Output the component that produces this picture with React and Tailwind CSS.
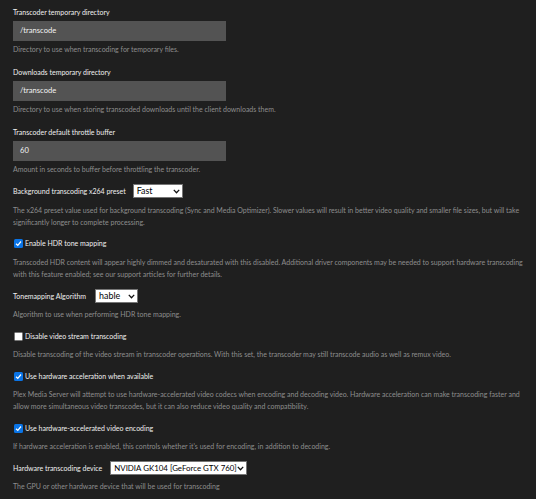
import React from "react";

const font = { fontFamily: 'Lato, "Open Sans", Arial, sans-serif' };

function Label({ children, className = "" }) {
  return <div className={`h-[12px] leading-[12px] text-[7px] text-[#f0f0f0] whitespace-nowrap ${className}`}>{children}</div>;
}

function Help({ children, className = "" }) {
  return <div className={`leading-[12px] text-[7px] text-[#8e8e8e] pr-[8px] ${className}`}>{children}</div>;
}

function TextInput({ value }) {
  return (
    <div className="mt-[3px] h-[20px] w-[213px] bg-[#535353] flex items-center pl-[7px] text-[7.6px] text-[#f2f2f2]">
      {value}
    </div>
  );
}

function Select({ value, w, size = "text-[8.9px]" }) {
  return (
    <div className={`h-[14px] bg-white border border-[#767676] flex items-center justify-between pl-[3px] pr-[2px] text-black ${size} ${w}`}>
      <span className="leading-[12px] whitespace-nowrap">{value}</span>
      <svg width="7" height="5" viewBox="0 0 7 5" className="shrink-0">
        <path d="M0.8 0.9 L3.5 3.7 L6.2 0.9" fill="none" stroke="#111" strokeWidth="1.3" />
      </svg>
    </div>
  );
}

function Check({ checked, children, className = "" }) {
  return (
    <div className={`h-[12px] flex items-center gap-[2px] ${className}`}>
      {checked ? (
        <div className="w-[9px] h-[9px] rounded-[1.5px] bg-[#0a74e6] flex items-center justify-center ml-[1px]">
          <svg width="7" height="7" viewBox="0 0 7 7">
            <path d="M1 3.7 L2.8 5.4 L6 1.5" fill="none" stroke="white" strokeWidth="1.2" />
          </svg>
        </div>
      ) : (
        <div className="w-[9px] h-[9px] rounded-[1.5px] bg-white border border-[#777] ml-[1px]" />
      )}
      <span className="leading-[12px] text-[7px] text-[#f0f0f0] whitespace-nowrap">{children}</span>
    </div>
  );
}

function Row({ label, children, className = "", gap = "gap-[7px]" }) {
  return (
    <div className={`flex items-center ${gap} ${className}`}>
      <span className="leading-[12px] text-[7px] text-[#f0f0f0] whitespace-nowrap">{label}</span>
      {children}
    </div>
  );
}

export default function App() {
  return (
    <div className="w-[536px] h-[499px] bg-[#1f1f1f] pl-[13px] pt-[6px] overflow-hidden" style={font}>
      <Label>Transcoder temporary directory</Label>
      <TextInput value="/transcode" />
      <Help className="mt-[2px]">Directory to use when transcoding for temporary files.</Help>

      <Label className="mt-[11px]">Downloads temporary directory</Label>
      <TextInput value="/transcode" />
      <Help className="mt-[2px]">Directory to use when storing transcoded downloads until the client downloads them.</Help>

      <Label className="mt-[11px]">Transcoder default throttle buffer</Label>
      <TextInput value="60" />
      <Help className="mt-[2px]">Amount in seconds to buffer before throttling the transcoder.</Help>

      <Row label="Background transcoding x264 preset" className="mt-[9px]">
        <Select value="Fast" w="w-[50px]" />
      </Row>
      <Help className="mt-[6px]">
        The x264 preset value used for background transcoding (Sync and Media Optimizer). Slower values will result in better video quality and smaller file sizes, but will take significantly longer to complete processing.
      </Help>

      <Check checked className="mt-[9px]">Enable HDR tone mapping</Check>
      <Help className="mt-[7px]">
        Transcoded HDR content will appear highly dimmed and desaturated with this disabled. Additional driver components may be needed to support hardware transcoding with this feature enabled; see our support articles for further details.
      </Help>

      <Row label="Tonemapping Algorithm" className="mt-[9px]" gap="gap-[9px]">
        <Select value="hable" w="w-[43px]" />
      </Row>
      <Help className="mt-[5px]">Algorithm to use when performing HDR tone mapping.</Help>

      <Check className="mt-[10px]">Disable video stream transcoding</Check>
      <Help className="mt-[6px]">
        Disable transcoding of the video stream in transcoder operations. With this set, the transcoder may still transcode audio as well as remux video.
      </Help>

      <Check checked className="mt-[10px]">Use hardware acceleration when available</Check>
      <Help className="mt-[6px]">
        Plex Media Server will attempt to use hardware-accelerated video codecs when encoding and decoding video. Hardware acceleration can make transcoding faster and allow more simultaneous video transcodes, but it can also reduce video quality and compatibility.
      </Help>

      <Check checked className="mt-[10px]">Use hardware-accelerated video encoding</Check>
      <Help className="mt-[6px]">
        If hardware acceleration is enabled, this controls whether it's used for encoding, in addition to decoding.
      </Help>

      <Row label="Hardware transcoding device" className="mt-[9px]" gap="gap-[8px]">
        <Select value="NVIDIA GK104 [GeForce GTX 760]" w="w-[137px]" size="text-[7.9px]" />
      </Row>
      <Help className="mt-[5px]">The GPU or other hardware device that will be used for transcoding</Help>
    </div>
  );
}
